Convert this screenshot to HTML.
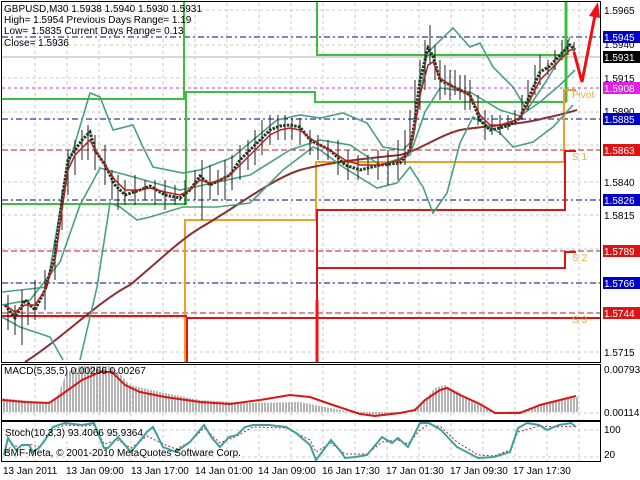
<!DOCTYPE html>
<html><head><meta charset="utf-8"><style>
html,body{margin:0;padding:0;background:#fff;width:640px;height:480px;overflow:hidden}
svg{display:block}
text{font-family:"Liberation Sans",sans-serif;font-size:10px}
</style></head><body>
<svg width="640" height="480" viewBox="0 0 640 480" xmlns="http://www.w3.org/2000/svg">
<defs>
<pattern id="bars" width="3" height="10" patternUnits="userSpaceOnUse"><rect x="0" y="0" width="2" height="10" fill="#b4b4b4"/></pattern>
</defs>
<rect width="640" height="480" fill="#fff"/>
<g stroke="#c8c8c8" stroke-dasharray="3,3" stroke-width="1">
<path d="M35 3V362M67 3V362M99 3V362M131 3V362M163 3V362M195 3V362M227 3V362M259 3V362M291 3V362M323 3V362M355 3V362M387 3V362M419 3V362M451 3V362M483 3V362M515 3V362M547 3V362M579 3V362"/>
<path d="M2 10H600M2 45H600M2 78H600M2 112H600M2 145H600M2 182H600M2 215H600M2 249H600M2 283H600M2 318H600M2 352H600"/>
<path d="M35 365V420M67 365V420M99 365V420M131 365V420M163 365V420M195 365V420M227 365V420M259 365V420M291 365V420M323 365V420M355 365V420M387 365V420M419 365V420M451 365V420M483 365V420M515 365V420M547 365V420M579 365V420"/>
<path d="M35 423V461M67 423V461M99 423V461M131 423V461M163 423V461M195 423V461M227 423V461M259 423V461M291 423V461M323 423V461M355 423V461M387 423V461M419 423V461M451 423V461M483 423V461M515 423V461M547 423V461M579 423V461"/>
<path d="M2 413H600M2 430H600M2 457H600"/>
</g>
<g stroke-width="1" stroke-dasharray="6,3,2,3">
<path d="M2 37H600M2 119H600M2 200H600M2 283H600" stroke="#00008b"/>
<path d="M2 150H600M2 251H600M2 313H600" stroke="#b22222" stroke-dasharray="6,3"/>
<path d="M2 88H600" stroke="#c040c0" stroke-dasharray="3,3"/>
</g>
<path d="M2 57H600" stroke="#b0b0b0"/>
<g stroke="#3cc03c" stroke-width="2" fill="none">
<path d="M2 99H184V2"/>
<path d="M317 2V55H566V2"/>
<path d="M2 204H186V92H315V102H566"/>
</g>
<path d="M566 2V102" stroke="#3cc03c" stroke-width="3"/>
<path d="M185 362V220H316V162H564V90H576" stroke="#f0a020" stroke-width="2" fill="none"/>
<g stroke="#dc1414" stroke-width="2" fill="none">
<path d="M187 362V318H600"/>
<path d="M317 362V210H565V151H576"/>
<path d="M318 268H565V252H576"/>
<path d="M2 316H187"/>
</g>
<path d="M317 362V300" stroke="#ff1010" stroke-width="3"/>
<g fill="#e0b040" font-size="9"><text x="572" y="98">Pivot</text><text x="572" y="160">S 1</text><text x="572" y="261">S 2</text><text x="572" y="323">S 3</text></g>
<path d="M25 362C60 340 100 300 130 285C160 260 180 240 200 228C240 205 270 180 300 170C330 162 370 158 400 155C420 150 440 135 460 130C490 125 520 125 545 118C560 115 570 112 577 110" stroke="#8b3030" stroke-width="2" fill="none"/>
<g stroke="#4aa080" stroke-width="1.6" fill="none">
<path d="M2 292L20 290L47 287L67 170L90 93L100 97L113 130L133 125L143 147L153 167L183 173L200 170L233 157L253 140L277 120L300 115L320 118L343 113L367 123L383 147L403 150L413 140L427 53L453 28L470 47L480 43L493 67L513 87L527 110L547 80L563 53L570 37"/>
<path d="M2 305L30 300L60 262L80 205L100 168L130 176L180 190L250 175L290 150L320 140L350 145L380 165L410 155L425 112L440 88L470 92L500 110L520 116L540 102L560 85L575 70"/>
<path d="M2 317L20 327L50 337L63 360M80 360L97 287L110 203L120 207L137 220L150 217L183 207L217 207L250 203L283 170L313 147L320 150L343 167L377 188L397 183L410 167L423 187L433 213L447 193L460 143L473 117L500 133L513 147L533 142L553 127L573 105"/>
</g>
<path d="M8 295V330M15 305V335M22 290V345M28 300V325M35 280V320M45 270V310M55 240V280M62 190V230M68 150V195M75 140V175M82 130V160M88 125V160M95 135V170M105 145V185M112 170V200M118 175V210M125 180V205M135 175V205M145 180V200M155 180V205M165 180V210M175 185V205M185 180V205M195 170V200M202 160V220M210 165V200M218 170V195M225 160V200M232 155V190M240 145V180M248 140V170M255 130V165M262 120V155M270 115V145M278 115V140M285 115V140M292 118V140M300 118V145M310 130V155M318 135V160M328 140V160M338 140V175M348 150V180M358 155V180M368 155V175M378 150V180M388 150V185M398 140V180M405 130V165M410 110V150M415 80V130M420 60V110M425 40V90M430 25V65M435 45V80M440 60V100M445 65V95M450 70V100M455 70V95M460 75V100M465 75V110M470 80V110M478 95V125M485 110V140M492 115V135M500 115V135M508 115V130M515 110V125M522 95V120M528 80V110M535 65V95M540 55V85M548 60V75M555 50V70M562 40V60M568 40V55M574 42V55" stroke="#202020" stroke-width="1"/>
<path d="M5 305L15 318L25 300L35 310L45 290L55 255L62 200L68 160L75 150L82 140L90 132L95 150L105 165L115 185L125 195L140 190L150 186L165 195L180 198L190 190L200 176L210 185L220 180L230 175L240 160L250 150L260 140L270 130L280 126L290 125L300 127L310 140L320 145L330 150L345 165L360 170L380 165L400 163L410 150L415 120L420 80L428 48L433 56L440 80L450 85L460 90L470 95L480 120L490 130L500 128L510 125L520 118L530 95L540 72L550 66L560 55L570 45L575 50" stroke="#1e3a1e" stroke-width="3" stroke-dasharray="2.5,1.2" fill="none"/>
<path d="M5 305L15 312L25 305L35 305L45 290L55 260L62 210L68 170L75 155L82 148L90 140L95 150L105 165L115 180L125 190L140 190L150 188L165 192L180 195L190 190L200 180L210 183L220 180L230 175L240 165L250 155L260 145L270 135L280 130L290 128L300 130L310 138L320 145L330 150L345 160L360 165L380 165L400 160L410 150L415 125L420 95L428 65L433 62L440 78L450 85L460 90L470 95L480 115L490 125L500 125L510 122L520 118L530 100L540 80L550 70L560 60L570 50L575 50" stroke="#b02020" stroke-width="1.5" fill="none"/>
<path d="M574 52L582 82L596 10" stroke="#ee1111" stroke-width="3" fill="none"/>
<path d="M598 2L589 16L600 18Z" fill="#ee1111"/>
<rect x="1.5" y="1.5" width="599" height="361" fill="none" stroke="#000"/>
<path d="M2 412V398L49 403L57 397L67 372L80 366L110 366L118 372L130 385L160 392L200 400L250 403L300 402L330 408L360 414L380 415L410 412L425 400L435 388L445 385L460 393L480 405L495 412L520 411L540 405L578 397V412Z" fill="url(#bars)"/>
<path d="M2 400L25 402L49 403L61 395L82 380L100 372L112 372L125 385L140 392L165 397L200 402L230 404L260 400L290 395L310 397L330 404L360 414L375 416L400 413L415 410L425 400L440 390L447 388L460 395L480 404L495 413L520 413L540 405L576 396" stroke="#dd1515" stroke-width="2" fill="none"/>
<rect x="1.5" y="364.5" width="599" height="56" fill="none" stroke="#000"/>
<text x="4" y="374" font-size="9">MACD(5,35,5) 0.00266 0.00267</text>
<path d="M4 455L12 445L20 447L29 444L39 447L45 440L53 430L65 425L82 426L94 425L104 444L118 440L131 448L147 436L163 444L176 449L190 442L204 428L220 443L237 436L253 427L286 428L310 440L316 452L331 443L345 454L367 454L382 442L398 440L408 444L420 430L429 424L441 427L457 442L478 455L494 456L510 450L518 432L539 426L559 427L576 426" stroke="#c02020" stroke-width="1" stroke-dasharray="2,2" fill="none"/>
<path d="M4 455L8 438L16 450L22 445L29 445L33 452L39 448L45 440L53 427L65 423L82 425L94 423L104 448L108 448L118 437L131 452L147 432L153 427L163 447L176 452L190 442L204 425L212 438L220 447L229 437L237 435L245 427L253 425L269 425L286 427L296 433L310 445L316 460L331 440L341 452L345 458L355 457L367 455L382 437L392 443L398 438L408 447L420 423L429 423L441 430L457 447L478 458L494 457L510 452L518 428L527 423L539 425L547 430L559 425L571 423L576 427" stroke="#3aa0a0" stroke-width="2" fill="none"/>
<rect x="1.5" y="421.5" width="599" height="40" fill="none" stroke="#000"/>
<text x="5" y="436" font-size="9">Stoch(10,3,3) 93.4066 95.9364</text>
<text x="4" y="456" font-size="9">BMF-Meta, © 2001-2010 MetaQuotes Software Corp.</text>
<g font-size="9.5" fill="#000">
<text x="4" y="12">GBPUSD,M30  1.5938 1.5940 1.5930 1.5931</text>
<text x="4" y="23">High= 1.5954   Previous Days Range= 1.19</text>
<text x="4" y="34">Low= 1.5835   Current Days Range= 0.13</text>
<text x="4" y="46">Close= 1.5936</text>
</g>
<g font-size="9.5" fill="#000">
<text x="604" y="14">1.5965</text><text x="604" y="48">1.5940</text><text x="604" y="82">1.5915</text><text x="604" y="115">1.5890</text><text x="604" y="186">1.5840</text><text x="604" y="219">1.5815</text><text x="604" y="356">1.5715</text>
<text x="604" y="373">0.00793</text><text x="604" y="416">0.00114</text><text x="604" y="433">100</text><text x="604" y="458">20</text>
</g>
<g font-size="9.5" fill="#fff">
<rect x="603" y="31" width="37" height="12" fill="#0000c8"/><text x="604" y="41">1.5945</text>
<rect x="603" y="51" width="37" height="12" fill="#000"/><text x="604" y="61">1.5931</text>
<rect x="603" y="82" width="37" height="12" fill="#e020e0"/><text x="604" y="92">1.5908</text>
<rect x="603" y="113" width="37" height="12" fill="#0000c8"/><text x="604" y="123">1.5885</text>
<rect x="603" y="144" width="37" height="12" fill="#dc1414"/><text x="604" y="154">1.5863</text>
<rect x="603" y="194" width="37" height="12" fill="#0000c8"/><text x="604" y="204">1.5826</text>
<rect x="603" y="245" width="37" height="12" fill="#dc1414"/><text x="604" y="255">1.5789</text>
<rect x="603" y="277" width="37" height="12" fill="#0000c8"/><text x="604" y="287">1.5766</text>
<rect x="603" y="307" width="37" height="12" fill="#dc1414"/><text x="604" y="317">1.5744</text>
</g>
<g font-size="9.5" fill="#000">
<text x="3" y="474">13 Jan 2011</text><text x="66" y="474">13 Jan 09:00</text><text x="131" y="474">13 Jan 17:00</text><text x="195" y="474">14 Jan 01:00</text><text x="258" y="474">14 Jan 09:00</text><text x="322" y="474">16 Jan 17:30</text><text x="386" y="474">17 Jan 01:30</text><text x="450" y="474">17 Jan 09:30</text><text x="513" y="474">17 Jan 17:30</text>
</g>
</svg>
</body></html>
